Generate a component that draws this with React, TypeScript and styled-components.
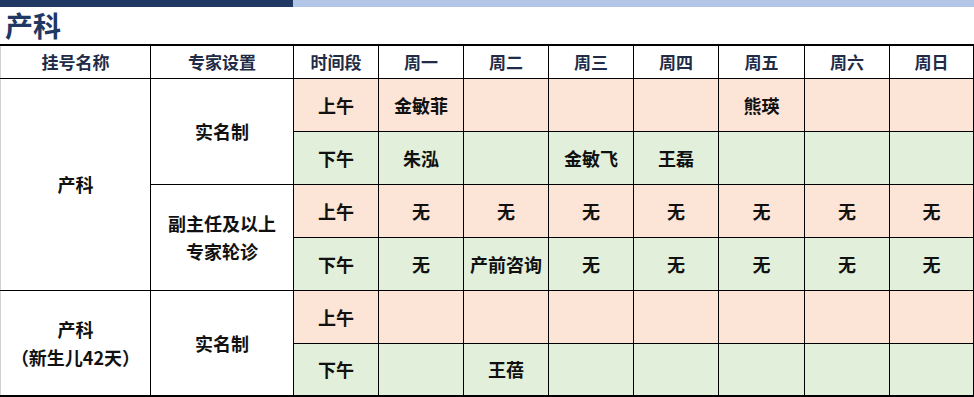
import styled, { createGlobalStyle } from 'styled-components';

const GlobalStyle = createGlobalStyle`
    html, body {
        margin: 0;
        padding: 0;
        background: #fff;
    }
    body {
        font-family: "Noto Sans CJK SC", "Noto Sans", sans-serif;
    }
`;

const days = ['周一', '周二', '周三', '周四', '周五', '周六', '周日'];
const colWidths = [150, 143, 85, 85, 85, 85, 85, 86, 85, 85];

type Slot = { period: '上午' | '下午'; cells: string[] };
type Group = { expert: string[]; slots: Slot[] };
type Dept = { name: string[]; groups: Group[] };

const data: Dept[] = [
    {
        name: ['产科'],
        groups: [
            {
                expert: ['实名制'],
                slots: [
                    { period: '上午', cells: ['金敏菲', '', '', '', '熊瑛', '', ''] },
                    { period: '下午', cells: ['朱泓', '', '金敏飞', '王磊', '', '', ''] }
                ]
            },
            {
                expert: ['副主任及以上', '专家轮诊'],
                slots: [
                    { period: '上午', cells: ['无', '无', '无', '无', '无', '无', '无'] },
                    { period: '下午', cells: ['无', '产前咨询', '无', '无', '无', '无', '无'] }
                ]
            }
        ]
    },
    {
        name: ['产科', '（新生儿42天）'],
        groups: [
            {
                expert: ['实名制'],
                slots: [
                    { period: '上午', cells: ['', '', '', '', '', '', ''] },
                    { period: '下午', cells: ['', '王蓓', '', '', '', '', ''] }
                ]
            }
        ]
    }
];

const App = () => {
    return (
        <Page>
            <GlobalStyle />
            <TopBar>
                <BarDark />
                <BarLight />
            </TopBar>
            <Title>产科</Title>
            <Table>
                <colgroup>
                    {colWidths.map((w, i) => (
                        <col key={i} style={{ width: w }} />
                    ))}
                </colgroup>
                <thead>
                    <HeadRow>
                        <HeadCell className="first">挂号名称</HeadCell>
                        <HeadCell>专家设置</HeadCell>
                        <HeadCell>时间段</HeadCell>
                        {days.map(d => (
                            <HeadCell key={d}>{d}</HeadCell>
                        ))}
                    </HeadRow>
                </thead>
                <tbody>
                    {data.map((dept, di) => {
                        const deptRows = dept.groups.reduce((n, g) => n + g.slots.length, 0);
                        return dept.groups.map((group, gi) =>
                            group.slots.map((slot, si) => (
                                <BodyRow key={`${di}-${gi}-${si}`}>
                                    {gi === 0 && si === 0 && (
                                        <LabelCell rowSpan={deptRows} className="first">
                                            {dept.name.map(line => (
                                                <Line key={line}>{line}</Line>
                                            ))}
                                        </LabelCell>
                                    )}
                                    {si === 0 && (
                                        <LabelCell rowSpan={group.slots.length}>
                                            {group.expert.map(line => (
                                                <Line key={line}>{line}</Line>
                                            ))}
                                        </LabelCell>
                                    )}
                                    <SlotCell $am={slot.period === '上午'}>{slot.period}</SlotCell>
                                    {slot.cells.map((c, ci) => (
                                        <SlotCell key={ci} $am={slot.period === '上午'}>
                                            {c}
                                        </SlotCell>
                                    ))}
                                </BodyRow>
                            ))
                        );
                    })}
                </tbody>
            </Table>
        </Page>
    );
};

const Page = styled.div`
    width: 974px;
    height: 397px;
    overflow: hidden;
`;

const TopBar = styled.div`
    display: flex;
    height: 7px;
`;

const BarDark = styled.div`
    width: 293px;
    background: #203864;
`;

const BarLight = styled.div`
    flex: 1;
    background: #b4c6e7;
`;

const Title = styled.h1`
    margin: 0;
    height: 37px;
    padding-left: 5px;
    font-size: 28px;
    line-height: 37px;
    font-weight: 700;
    color: #1f3864;
`;

const Table = styled.table`
    width: 974px;
    border-collapse: collapse;
    table-layout: fixed;
    border-top: 2px solid #000;
    border-right: 3px solid #000;
    border-bottom: 3px solid #000;
`;

const HeadRow = styled.tr`
    height: 33px;
`;

const HeadCell = styled.th`
    border: 1px solid #000;
    padding: 0;
    font-size: 17px;
    font-weight: 700;
    color: #222b45;
    text-align: center;
    vertical-align: middle;

    &.first {
        border-left: 1px solid #d0d0d0;
    }
`;

const BodyRow = styled.tr`
    height: 53px;
`;

const LabelCell = styled.td`
    border: 1px solid #000;
    padding: 0;
    background: #fff;
    font-size: 18px;
    font-weight: 700;
    color: #111;
    text-align: center;
    vertical-align: middle;
    line-height: 28px;

    &.first {
        border-left: 1px solid #d0d0d0;
    }
`;

const Line = styled.div`
    white-space: nowrap;
`;

const SlotCell = styled.td<{ $am: boolean }>`
    border: 1px solid #000;
    padding: 0;
    background: ${p => (p.$am ? '#fce4d6' : '#e2efda')};
    font-size: 18px;
    font-weight: 700;
    color: #111;
    text-align: center;
    vertical-align: middle;
    white-space: nowrap;
`;

export default App;
